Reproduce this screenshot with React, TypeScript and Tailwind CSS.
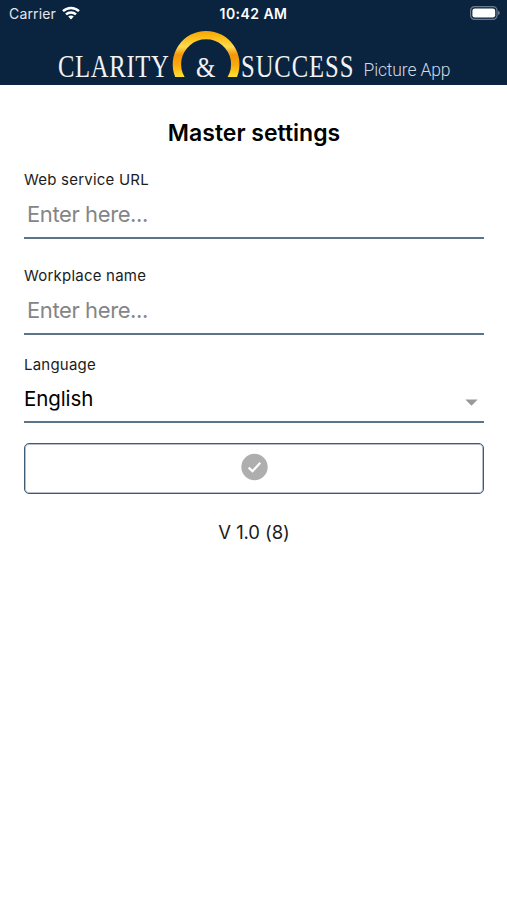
import React from 'react'

const fields = [
  { label: 'Web service URL', name: 'url' },
  { label: 'Workplace name', name: 'workplace' },
]

const Logo = () => {
  return (
    <svg className="block h-[57px] w-full" viewBox="0 28 507 57">
      <defs>
        <linearGradient id="gold" x1="0" y1="0" x2="0" y2="1">
          <stop offset="0" stopColor="#f5a506" />
          <stop offset="0.15" stopColor="#fdbd18" />
          <stop offset="0.34" stopColor="#ffdc50" />
          <stop offset="0.52" stopColor="#f4950a" />
          <stop offset="0.74" stopColor="#fba90f" />
          <stop offset="1" stopColor="#ffe22f" />
        </linearGradient>
      </defs>
      <path d="M175.2 77A33.4 33.4 0 1 1 237 77H227.6A25 25 0 1 0 184.6 77Z" fill="url(#gold)" />
      <g fill="#f1f3f5" fontFamily="'Liberation Serif', serif" fontSize="32">
        <text transform="translate(58 77) scale(.77 1)" textLength="144">CLARITY</text>
        <text transform="translate(196 77) scale(.83 1)" fontSize="30">&amp;</text>
        <text transform="translate(241 77) scale(.77 1)" textLength="146">SUCCESS</text>
      </g>
      <text x="363.5" y="76" fill="#d3d9e0" fontFamily="Roboto, sans-serif" fontWeight="300" fontSize="17.5" textLength="87">Picture App</text>
    </svg>
  )
}

const StatusBar = () => {
  return (
    <div className="grid h-7 grid-cols-3 items-center pl-[9px] pr-[7px] text-[14px] text-white">
      <div className="flex items-center gap-[6px]">
        <span className="-mt-[2px] tracking-[0.15px] text-gray-200">Carrier</span>
        <svg className="-mt-[2px]" width="18" height="14" viewBox="0 0 18 14" fill="none" stroke="#fff" strokeWidth="2.5">
          <path d="M1 5.2C5.6 .8 12.4 .8 17 5.2" />
          <path d="M4 8.4C6.8 5.8 11.2 5.8 14 8.4" />
          <path d="M6.2 10.5C7.8 9.1 10.2 9.1 11.8 10.5L9 13.5Z" fill="#fff" stroke="none" />
        </svg>
      </div>
      <span className="-ml-[2px] -mt-[2px] text-center text-[14px] font-semibold tracking-[0.45px]">10:42 AM</span>
      <svg className="-mt-[2px] justify-self-end" width="30" height="14" viewBox="0 0 30 14">
        <rect x=".6" y=".6" width="26.4" height="12.8" rx="4" fill="none" stroke="#6c7c8e" strokeWidth="1.2" />
        <rect x="2.4" y="2.4" width="22.8" height="9.2" rx="2.4" fill="#fff" />
        <path d="M28 4.8Q29.8 5.4 29.8 7T28 9.2Z" fill="#6c7c8e" />
      </svg>
    </div>
  )
}

const App = () => {
  return (
    <div className="h-[900px] w-[507px] overflow-hidden bg-white font-['Inter',sans-serif] text-black">
      <header className="h-[85px] bg-[#0a2440]">
        <StatusBar />
        <Logo />
      </header>

      <main className="pl-6 pr-[23px] pt-[33px]">
        <h1 className="text-center text-[23px] font-semibold leading-[30px]">Master settings</h1>

        {fields.map((field, i) => (
          <div key={field.name} className={i === 0 ? 'mt-[22px]' : 'mt-[27px]'}>
            <label htmlFor={field.name} className="block text-[15px] leading-5 tracking-[0.22px] text-[#1c1c1c]">{field.label}</label>
            <input
              id={field.name}
              placeholder="Enter here..."
              className="block h-[49px] w-full border-b-2 border-[#5c7489] pl-[3px] text-[22px] tracking-[-0.4px] outline-none placeholder:text-[#858585]"
            />
          </div>
        ))}

        <div className="mt-[20px]">
          <div className="text-[15px] leading-5 tracking-[0.22px] text-[#1c1c1c]">Language</div>
          <div className="flex h-12 items-center justify-between border-b-2 border-[#5c7489] pr-[6px]">
            <span className="mt-[2px] text-[20.5px] tracking-[-0.1px]">English</span>
            <svg className="mt-[9px]" width="13" height="7" viewBox="0 0 13 7">
              <path d="M.3 .5H12.7L6.5 6.7Z" fill="#999" />
            </svg>
          </div>
        </div>

        <button className="mt-5 flex h-[51px] w-full items-center justify-center rounded-[5px] border border-[#3f5b74] shadow-[inset_0_0_0_1px_#b4c1cc]">
          <svg className="-mt-[4px]" width="28" height="28" viewBox="0 0 28 28">
            <circle cx="14.5" cy="14" r="13.2" fill="#aeaeae" />
            <path d="M8.7 14.6L12.5 18.2L20.3 9.8" fill="none" stroke="#fff" strokeWidth="2.2" />
          </svg>
        </button>

        <p className="mt-[24px] text-center text-[18.5px] leading-7 text-[#1c1c1c] tracking-[-0.1px]">V 1.0 (8)</p>
      </main>
    </div>
  )
}

export default App
